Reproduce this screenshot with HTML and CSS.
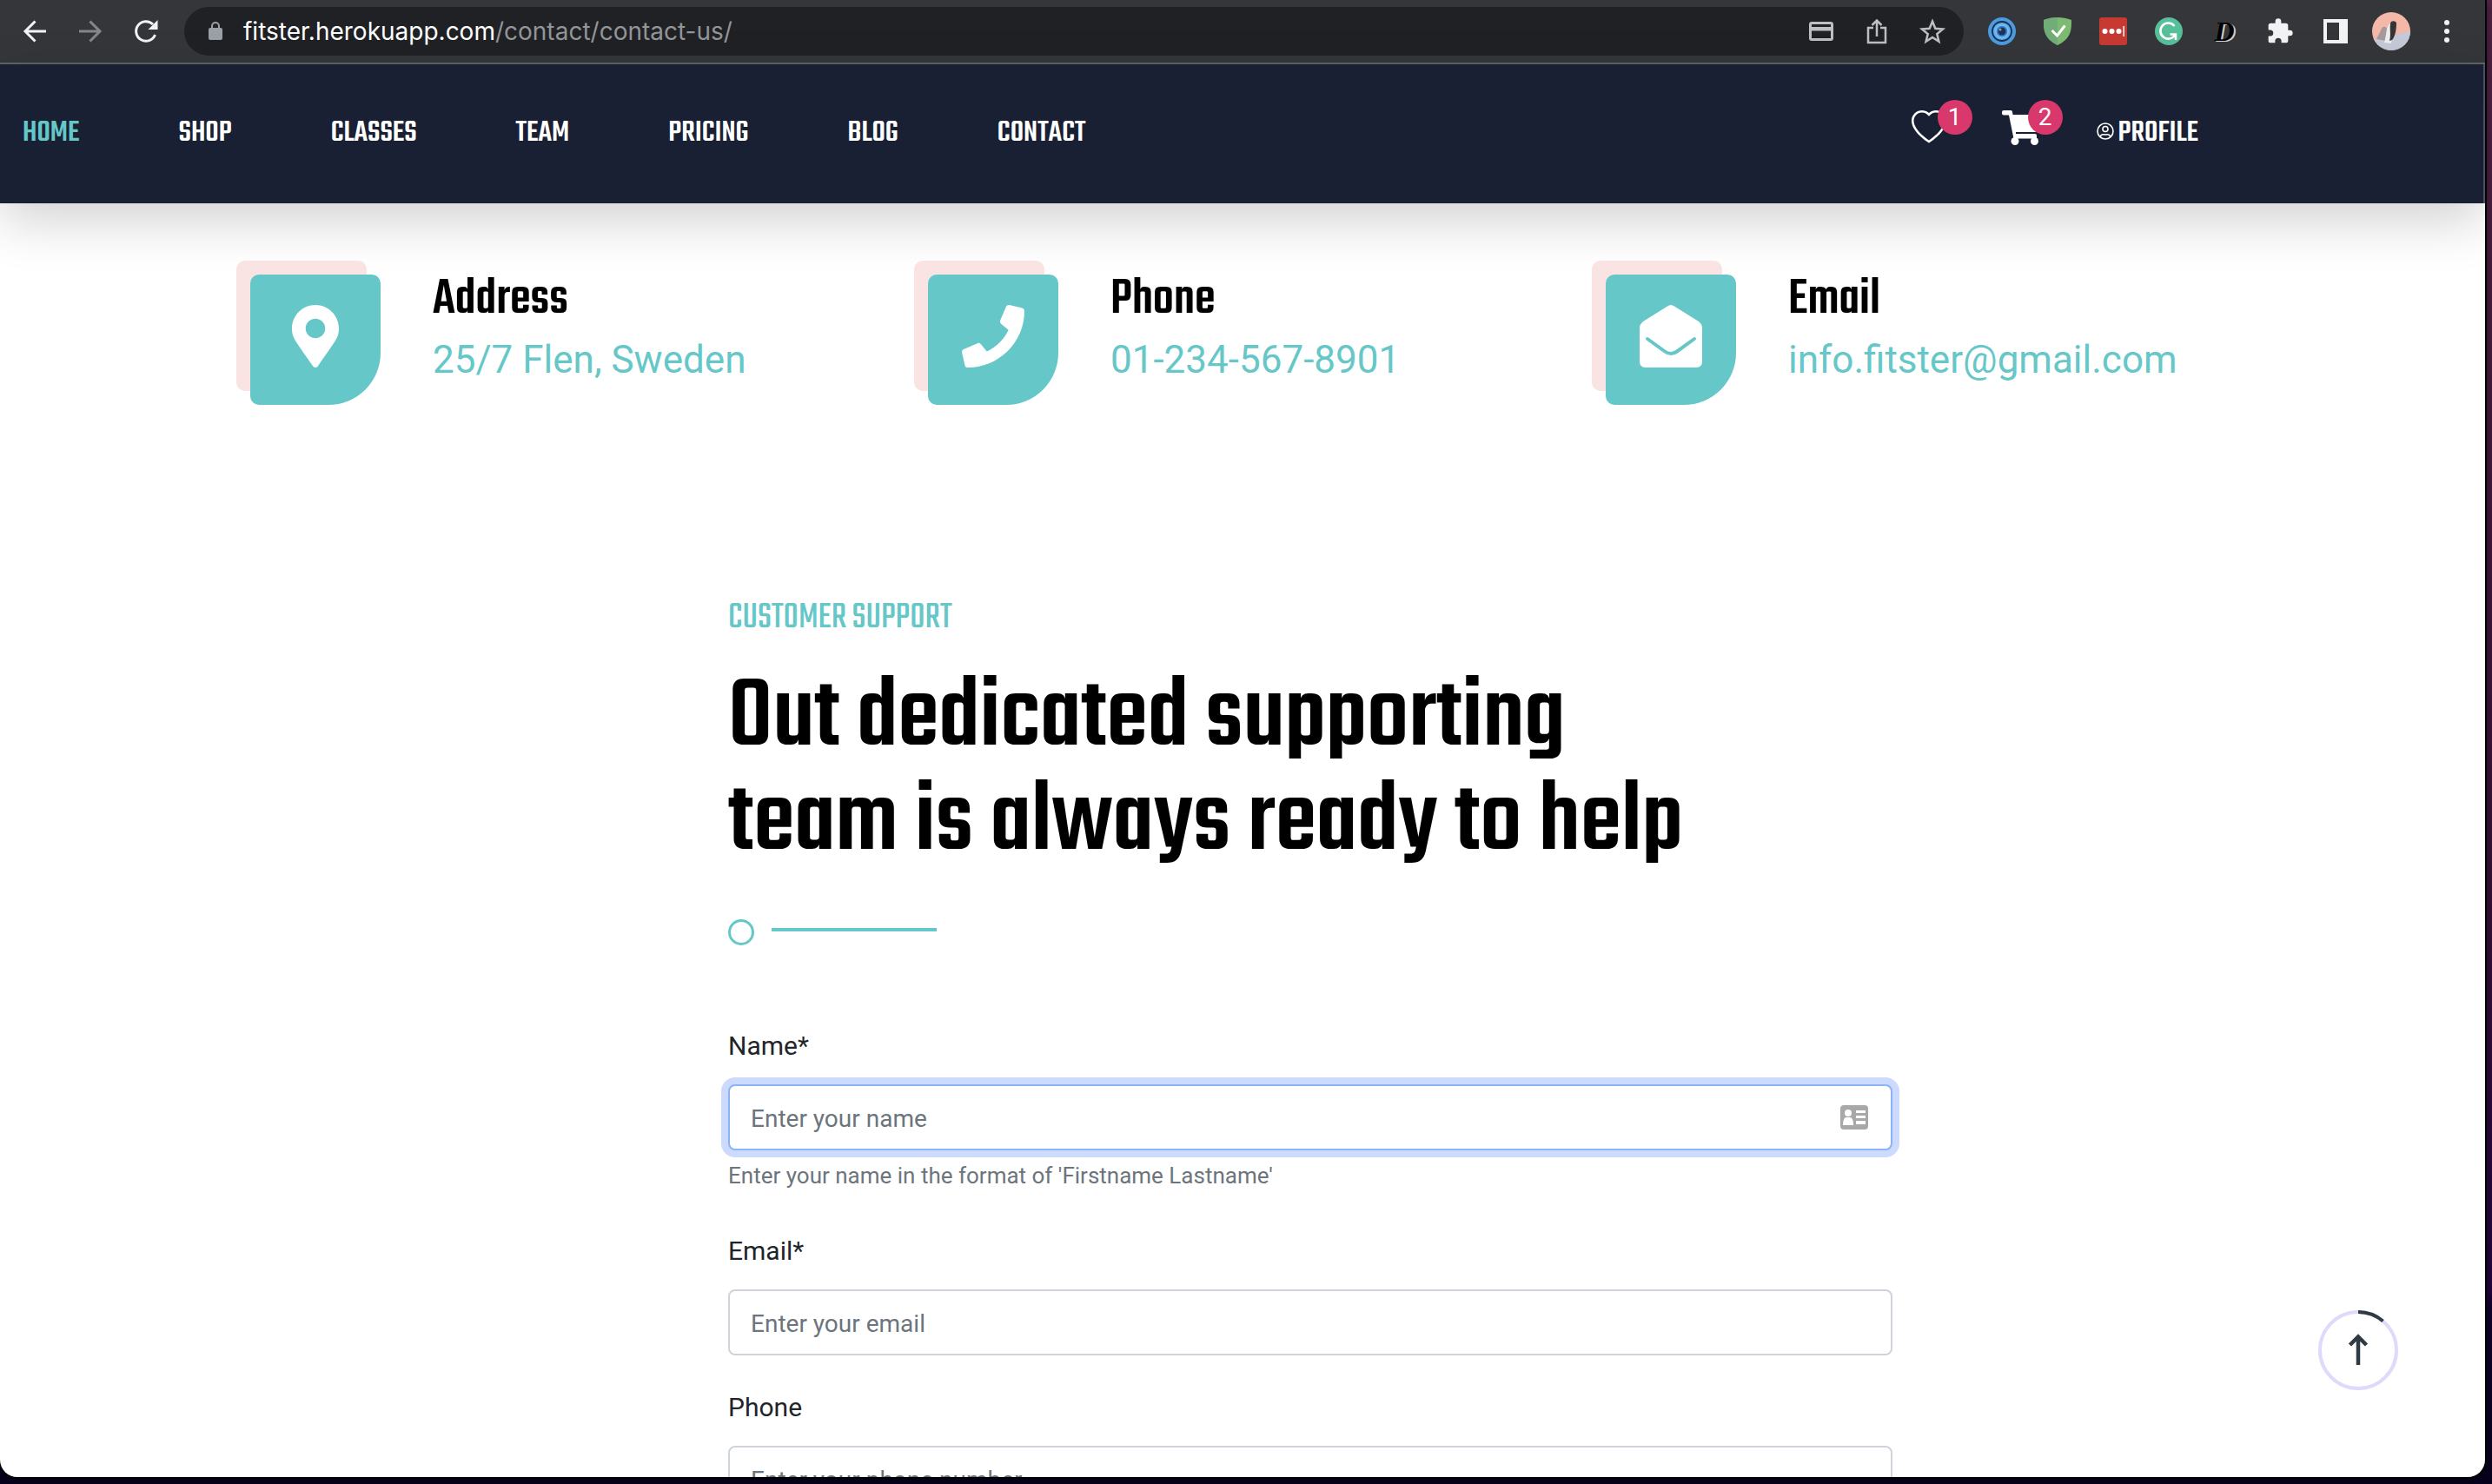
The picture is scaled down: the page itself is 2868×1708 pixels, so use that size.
FILE: index.html
```html
<!DOCTYPE html>
<html lang="en">
<head>
<meta charset="utf-8">
<title>Fitster - Contact us</title>
<link rel="stylesheet" href="styles.css">
</head>
<body>
<div class="window">
  <div class="toolbar">
    <button class="tool" aria-label="Back"><svg width="32" height="32" viewBox="0 0 32 32" fill="none" stroke="#f1f3f4" stroke-width="3"><path d="M29 16H5M16.500 4.500 5 16l11.500 11.500"/></svg></button>
    <button class="tool" aria-label="Forward"><svg width="32" height="32" viewBox="0 0 32 32" fill="none" stroke="#85868a" stroke-width="3"><path d="M3 16h24M15.500 4.500 27 16 15.500 27.500"/></svg></button>
    <button class="tool" aria-label="Reload"><svg width="32" height="32" viewBox="0 0 32 32"><path d="M26.500 20a11.300 11.300 0 1 1-2.500-12" fill="none" stroke="#f1f3f4" stroke-width="3"/><path d="M29.500 3v11h-11z" fill="#f1f3f4"/></svg></button>
    <div class="omnibox">
      <svg class="lock" width="16" height="24" viewBox="0 0 16 24"><rect y="8" width="16" height="14" rx="2" fill="#9aa0a6"/><path d="M4 9V6a4 4 0 0 1 8 0v3" fill="none" stroke="#9aa0a6" stroke-width="2"/></svg>
      <div class="url">fitster.herokuapp.com<span class="url-path">/contact/contact-us/</span></div>
      <button class="tool" aria-label="Payment methods"><svg width="32" height="32" viewBox="0 0 32 32"><path fill="#bdbfc2" fill-rule="evenodd" d="M5 5h22a3 3 0 0 1 3 3v16a3 3 0 0 1-3 3H5a3 3 0 0 1-3-3V8a3 3 0 0 1 3-3zm0 3v3h22V8zm0 7.500v8.500h22v-8.500z"/></svg></button>
      <button class="tool" aria-label="Share"><svg width="32" height="32" viewBox="0 0 32 32" fill="none" stroke="#bdbfc2" stroke-width="2.500"><path d="M12 12H6v17h20V12h-6M16 22V4M10.500 9 16 3.500 21.500 9"/></svg></button>
      <button class="tool" aria-label="Bookmark"><svg width="32" height="32" viewBox="0 0 32 32" fill="none" stroke="#bdbfc2" stroke-width="2.500"><path d="m16 4.500 3.300 8.200 8.700.7-6.700 5.700 2.100 8.600L16 23l-7.400 4.700 2.100-8.600L4 13.400l8.700-.7z"/></svg></button>
    </div>
    <div class="extensions">
      <button class="tool" aria-label="Lens extension"><svg width="32" height="32" viewBox="0 0 32 32"><circle cx="16" cy="16" r="16" fill="#4c9be0"/><circle cx="16" cy="16" r="11" fill="#63b2f0" stroke="#17324d" stroke-width="1.800"/><circle cx="16" cy="16" r="7" fill="#3c83cf" stroke="#8cd0ff"/><circle cx="16" cy="16" r="4.500" fill="#1d3550"/><circle cx="14" cy="14" r="1.500" fill="#7fa3c2"/></svg></button>
      <button class="tool" aria-label="Ad blocker"><svg width="32" height="32" viewBox="0 0 32 32"><path d="M16 0c5 0 11 1 16 3 0 11 0 21-16 29C0 24 0 14 0 3c5-2 11-3 16-3z" fill="#7dba72"/><path d="M16 0v32C0 24 0 14 0 3c5-2 11-3 16-3z" fill="#72ac79"/><path d="m9.500 15 6 6 9-11.500" fill="none" stroke="#fff" stroke-width="3"/></svg></button>
      <button class="tool" aria-label="Password manager"><svg width="32" height="32" viewBox="0 0 32 32"><rect width="32" height="32" rx="3" fill="#c63a32"/><g fill="#fff"><circle cx="6.500" cy="16" r="3"/><circle cx="14.500" cy="16" r="3"/><circle cx="22.500" cy="16" r="3"/><path d="M27.500 10H29v12h-1.500z"/></g></svg></button>
      <button class="tool" aria-label="Grammar checker"><svg width="32" height="32" viewBox="0 0 32 32"><circle cx="16" cy="16" r="16" fill="#58bf9b"/><path d="M22.500 10a9 9 0 1 0 1 9.500H17.500M24 26v-6.500" fill="none" stroke="#fff" stroke-width="2.600"/></svg></button>
      <button class="tool script-logo" aria-label="Dictionary">D</button>
      <button class="tool" aria-label="Extensions"><svg width="32" height="32" viewBox="0 0 24 24"><path fill="#f1f3f4" d="M20.500 11H19V7a2 2 0 0 0-2-2h-4V3.500a2.500 2.500 0 0 0-5 0V5H4a2 2 0 0 0-2 2v3.800h1.500a2.700 2.700 0 0 1 0 5.400H2V20a2 2 0 0 0 2 2h3.800v-1.500a2.700 2.700 0 0 1 5.400 0V22H17a2 2 0 0 0 2-2v-4h1.500a2.500 2.500 0 0 0 0-5z"/></svg></button>
      <button class="tool" aria-label="Side panel"><svg width="32" height="32" viewBox="0 0 32 32"><path fill="#f1f3f4" fill-rule="evenodd" d="M2 2h28v28H2zm4 4v20h14V6z"/></svg></button>
      <button class="tool" aria-label="Browser profile"><svg width="44" height="44" viewBox="0 0 44 44"><clipPath id="face"><circle cx="22" cy="22" r="22"/></clipPath><g clip-path="url(#face)"><path fill="#f4b8a8" d="M0 0h44v44H0z"/><path fill="#c5c9d8" d="M0 32 44 22v22H0z"/><path fill="#a59a9c" d="M5 31 11 19c1-3 5-3 6 0l-1 14z"/><path fill="#eceef0" d="M14 35c3-10 2-20 8-23l3 4-3 20z"/><path fill="#353538" d="M21 13c1-4 7-3 7 0 0 5-1 15-5 19l-3 1c2-7 0-12 1-20z"/></g></svg></button>
      <button class="tool" aria-label="Menu"><svg width="32" height="32" viewBox="0 0 32 32" fill="#f1f3f4"><circle cx="16" cy="6" r="3"/><circle cx="16" cy="16" r="3"/><circle cx="16" cy="26" r="3"/></svg></button>
    </div>
  </div>

  <header class="site-header">
    <nav class="menu">
      <a class="active" href="#">HOME</a>
      <a href="#">SHOP</a>
      <a href="#">CLASSES</a>
      <a href="#">TEAM</a>
      <a href="#">PRICING</a>
      <a href="#">BLOG</a>
      <a href="#">CONTACT</a>
    </nav>
    <div class="account">
      <a class="counter" href="#" aria-label="Wishlist"><svg width="40" height="40" viewBox="0 0 16 16"><path fill="#fff" d="m8 2.748-.717-.737C5.600.281 2.514.878 1.400 3.053c-.523 1.023-.641 2.500.314 4.385.920 1.815 2.834 3.989 6.286 6.357 3.452-2.368 5.365-4.542 6.286-6.357.955-1.886.838-3.362.314-4.385C13.486.878 10.400.280 8.717 2.010zM8 15C-7.333 4.868 3.279-3.040 7.824 1.143c.06.055.119.112.176.171a3.120 3.120 0 0 1 .176-.170C12.720-3.042 23.333 4.867 8 15"/></svg><span class="badge">1</span></a>
      <a class="counter" href="#" aria-label="Cart"><svg width="44" height="40" viewBox="0 0 44 40"><g fill="#fff"><path d="M2 0h8q2 0 2 2l.6 3H44l-4 20H16l.4 2H38q2 0 2 2V32.500H13.500L8 5.500H2q-2 0-2-2V2q0-2 2-2z"/><circle cx="15" cy="35.500" r="4.500"/><circle cx="37.500" cy="35.500" r="4.500"/></g><path d="M16 26h24" stroke="#192033" stroke-width="2"/></svg><span class="badge">2</span></a>
      <a class="profile" href="#"><svg width="20" height="20" viewBox="0 0 20 20" fill="none" stroke="#fff" stroke-width="1.600"><circle cx="10" cy="10" r="9"/><circle cx="10" cy="7.500" r="3"/><path d="M4 16.500c1-3 4-3 6-2.500 2-.5 5-.5 6 2.500"/></svg>PROFILE</a>
    </div>
  </header>

  <main class="page">
    <section class="contacts">
      <div class="contact">
        <div class="tile"><svg width="54" height="72" viewBox="0 0 384 512"><path fill="#fff" d="M172.268 501.670C26.970 291.031 0 269.413 0 192 0 85.961 85.961 0 192 0s192 85.961 192 192c0 77.413-26.970 99.031-172.268 309.670-9.535 13.774-29.930 13.773-39.464 0zM192 272c44.183 0 80-35.817 80-80s-35.817-80-80-80-80 35.817-80 80 35.817 80 80 80z"/></svg></div>
        <div><h3>Address</h3><p>25/7 Flen, Sweden</p></div>
      </div>
      <div class="contact">
        <div class="tile"><svg width="72" height="72" viewBox="0 0 512 512"><path fill="#fff" d="M493.400 24.600l-104-24c-11.300-2.600-22.900 3.300-27.500 13.900l-48 112c-4.200 9.800-1.400 21.300 6.900 28l60.600 49.600c-36 76.700-98.900 140.500-177.200 177.200l-49.600-60.600c-6.800-8.300-18.200-11.100-28-6.900l-112 48C3.900 366.500-2 378.100.6 389.400l24 104C27.100 504.200 36.700 512 48 512c256.100 0 464-207.500 464-464 0-11.200-7.700-20.900-18.600-23.400z"/></svg></div>
        <div><h3>Phone</h3><p>01-234-567-8901</p></div>
      </div>
      <div class="contact">
        <div class="tile"><svg width="72" height="72" viewBox="0 0 72 72"><path fill="#fff" d="M32 1.500q4-3 8 0L68 19q4 3 4 8v38q0 7-7 7H7q-7 0-7-7V27q0-5 4-8z"/><path fill="none" stroke="#66c7c8" stroke-width="4" stroke-linecap="round" d="m9 39 20 14.500q7 5 14 0L63 39"/></svg></div>
        <div><h3>Email</h3><p>info.fitster@gmail.com</p></div>
      </div>
    </section>

    <section class="support">
      <p class="eyebrow">CUSTOMER SUPPORT</p>
      <h1>Out dedicated supporting<br>team is always ready to help</h1>
      <div class="divider"><span class="ring"></span><span class="rule"></span></div>
      <form>
        <div class="field">
          <label for="name">Name*</label>
          <div class="control focused">
            <input id="name" type="text" placeholder="Enter your name">
            <svg width="32" height="28" viewBox="0 0 32 28"><rect width="32" height="28" rx="4" fill="#a8a8a8"/><g fill="#fff"><circle cx="9" cy="9" r="4"/><path d="M3 23q0-9 4-9h4q4 0 4 9zM18 6h11v3H18zM18 12h11v3H18zM18 18h11v4H18z"/></g></svg>
          </div>
          <p class="hint">Enter your name in the format of 'Firstname Lastname'</p>
        </div>
        <div class="field">
          <label for="email">Email*</label>
          <div class="control"><input id="email" type="email" placeholder="Enter your email"></div>
        </div>
        <div class="field">
          <label for="phone">Phone</label>
          <div class="control"><input id="phone" type="tel" placeholder="Enter your phone number"></div>
        </div>
      </form>
    </section>
  </main>

  <button class="to-top" aria-label="Back to top"><svg width="92" height="92" viewBox="0 0 92 92" fill="none"><circle cx="46" cy="46" r="44" stroke="#dfd9fb" stroke-width="4"/><path d="M46 2a44 44 0 0 1 28.500 10.500" stroke="#2f3a42" stroke-width="4"/><path d="M46 63V31M36.500 40 46 30.500 55.500 40" stroke="#2f3a42" stroke-width="4.500"/></svg></button>
</div>
</body>
</html>
```
FILE: styles.css
```css
* {
  box-sizing: border-box;
}

body {
  margin: 0;
  height: 100vh;
  padding: 0 8px 8px 0;
  overflow: hidden;
  font-family: Roboto, "Liberation Sans", sans-serif;
  color: #212529;
  background: linear-gradient(180deg, #552546, #3a1238 60%, #240440 87%, #12002e 88%, #08001e);
}

h1, h3, p {
  margin: 0;
}

a {
  color: inherit;
  text-decoration: none;
}

button {
  padding: 0;
  border: 0;
  background: none;
}

svg {
  display: block;
  flex: none;
}

.window {
  position: relative;
  display: flex;
  flex-direction: column;
  height: 100%;
  overflow: hidden;
  background: #fff;
  border-radius: 0 0 20px 20px;
  box-shadow: 0 0 0 2px #000, 0 6px 12px 2px rgba(4, 0, 15, 0.6);
}

/* Browser toolbar */
.toolbar {
  display: flex;
  align-items: center;
  flex: none;
  height: 74px;
  padding: 0 12px 0 8px;
  background: #35363a;
  border-bottom: 2px solid #616266;
}

.tool {
  display: flex;
  align-items: center;
  justify-content: center;
  flex: none;
  width: 64px;
  height: 56px;
}

.omnibox {
  display: flex;
  align-items: center;
  flex: 1;
  height: 56px;
  margin: 0 12px;
  padding: 0 4px 0 28px;
  border-radius: 28px;
  background: #202124;
}

.url {
  flex: 1;
  margin-left: 24px;
  font: 28px/40px Inter, "Liberation Sans", sans-serif;
  color: #fff;
}

.url-path {
  color: #939598;
}

.extensions {
  display: flex;
}

.script-logo {
  font: italic bold 32px "Liberation Serif", serif;
  color: #000;
  text-shadow: 2px 1px 0 #d0d0d0;
}

/* Site header */
.site-header {
  position: relative;
  display: flex;
  align-items: center;
  justify-content: space-between;
  flex: none;
  height: 160px;
  padding: 0 328px 0 26px;
  border-right: 2px solid #4a5060;
  background: #192033;
  box-shadow: 0 20px 60px rgba(0, 0, 0, 0.18);
  font: 500 36px/52px Teko, "Roboto Condensed", sans-serif;
  color: #fff;
}

.menu {
  display: flex;
  gap: 114px;
}

.menu .active {
  color: #66c7c8;
}

.account {
  display: flex;
  align-items: center;
}

.counter {
  position: relative;
  width: 40px;
  margin: 0 64px 14px 0;
}

.badge {
  position: absolute;
  top: -12px;
  left: 30px;
  width: 40px;
  height: 40px;
  border-radius: 50%;
  background: #d9386c;
  font: 28px/40px Roboto, "Liberation Sans", sans-serif;
  text-align: center;
}

.profile {
  display: flex;
  align-items: center;
  gap: 5px;
  margin-left: 5px;
}

.profile svg {
  margin-bottom: 6px;
}

/* Page */
.page {
  flex: 1;
  min-height: 0;
  padding-top: 82px;
}

.contacts {
  position: relative;
  z-index: 0;
  display: grid;
  grid-template-columns: repeat(3, 1fr);
  max-width: 2340px;
  margin: 0 auto;
}

.contact {
  display: flex;
  gap: 60px;
  padding-left: 28px;
}

.tile {
  position: relative;
  display: flex;
  align-items: center;
  justify-content: center;
  flex: none;
  width: 150px;
  height: 150px;
  padding-bottom: 8px;
  border-radius: 10px 10px 60px 10px;
  background: #66c7c8;
}

.tile::before {
  content: "";
  position: absolute;
  z-index: -1;
  top: -16px;
  left: -16px;
  width: 150px;
  height: 150px;
  border-radius: 10px;
  background: #f9e3e3;
}

.contact h3 {
  margin-bottom: 8px;
  font: 500 60px/60px Teko, "Roboto Condensed", sans-serif;
  color: #000;
}

.contact p {
  font-size: 44px;
  line-height: 60px;
  color: #66c7c8;
}

.support {
  max-width: 2340px;
  margin: 220px auto 0;
  padding: 0 422px 0 578px;
}

.eyebrow {
  margin-bottom: 30px;
  font: 400 44px/52px Teko, "Roboto Condensed", sans-serif;
  color: #66c7c8;
}

.support h1 {
  font: 500 120px/120px Teko, "Roboto Condensed", sans-serif;
  color: #000;
}

.divider {
  display: flex;
  align-items: center;
  gap: 20px;
  margin: 50px 0 92px;
}

.ring {
  width: 30px;
  height: 30px;
  border: 3px solid #66c7c8;
  border-radius: 50%;
}

.rule {
  width: 190px;
  height: 4px;
  margin-bottom: 6px;
  background: #66c7c8;
}

.field {
  margin-bottom: 36px;
}

.field label {
  display: block;
  margin-bottom: 20px;
  font-size: 30px;
  line-height: 48px;
}

.control {
  display: flex;
  align-items: center;
  height: 76px;
  padding: 0 26px 0 24px;
  border: 2px solid #ced4da;
  border-radius: 8px;
  background: #fff;
}

.control.focused {
  border-color: #8bb3f6;
  box-shadow: 0 0 0 8px #cbdafd;
}

.control input {
  flex: 1;
  height: 72px;
  padding: 2px 0 0;
  border: 0;
  outline: 0;
  background: none;
  font: 28px/48px Roboto, "Liberation Sans", sans-serif;
  color: #212529;
}

.control input::placeholder {
  color: #6c757d;
  opacity: 1;
}

.hint {
  padding: 6px 0 4px;
  font-size: 26px;
  line-height: 46px;
  color: #6c757d;
}

.to-top {
  position: absolute;
  right: 100px;
  bottom: 100px;
}
```
